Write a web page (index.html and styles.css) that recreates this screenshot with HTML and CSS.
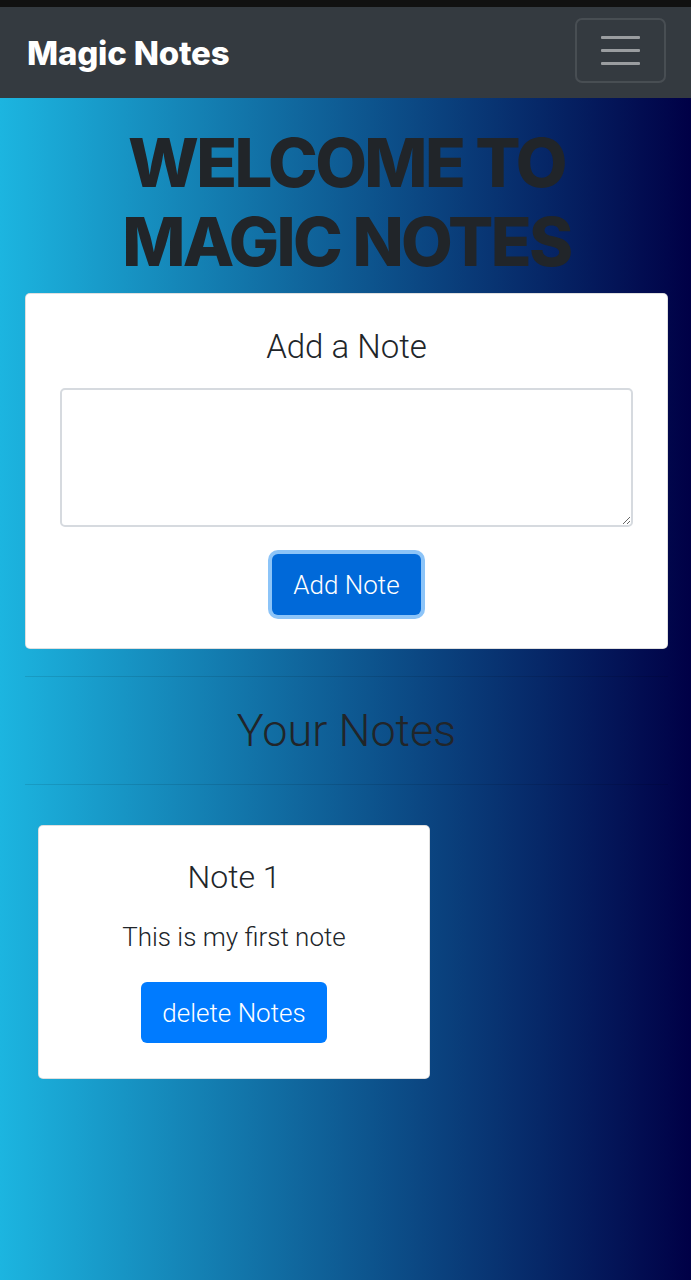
FILE: index.html
```html
<!DOCTYPE html>
<html>
<head>
<meta charset="utf-8">
<link rel="stylesheet" href="styles.css">
</head>
<body>
<div class="statusbar"></div>
<nav class="navbar">
  <a class="brand">Magic Notes</a>
  <button class="toggler"><span class="bar"></span><span class="bar"></span><span class="bar"></span></button>
</nav>
<main class="page">
  <h1 class="welcome">WELCOME TO<br>MAGIC NOTES</h1>
  <section class="card add-card">
    <h5 class="card-title">Add a Note</h5>
    <textarea class="note-input"></textarea>
    <div class="center"><button class="btn btn-add">Add Note</button></div>
  </section>
  <hr class="rule">
  <h1 class="your-notes">Your Notes</h1>
  <hr class="rule">
  <div class="notes">
    <div class="card note-card">
      <h5 class="note-title">Note 1</h5>
      <p class="note-text">This is my first note</p>
      <button class="btn btn-delete">delete Notes</button>
    </div>
  </div>
</main>
</body>
</html>
```

FILE: styles.css
```css
html, body {
  margin: 0;
  padding: 0;
}
body {
  min-height: 1280px;
  background: linear-gradient(to right, #1cb5e0, #000046);
  font-family: Roboto, "Liberation Sans", sans-serif;
  color: #212529;
}
.statusbar {
  height: 7px;
  background: #111111;
}
.navbar {
  height: 91px;
  background: #343a40;
  display: flex;
  align-items: center;
  justify-content: space-between;
  padding: 0 25px 0 27px;
  box-sizing: border-box;
}
.brand {
  color: #fff;
  font-family: Inter, "Open Sans", sans-serif;
  font-weight: 800;
  font-size: 33px;
  letter-spacing: -0.2px;
}
.toggler {
  width: 91px;
  height: 65px;
  border: 2px solid rgba(255,255,255,0.1);
  border-radius: 7px;
  background: transparent;
  display: flex;
  flex-direction: column;
  align-items: center;
  justify-content: center;
  gap: 10px;
  padding: 0;
  margin-top: -5px;
}
.bar {
  display: block;
  width: 39px;
  height: 3px;
  background: rgba(255,255,255,0.5);
  border-radius: 1px;
}
.page {
  padding: 25px 23px 0 25px;
}
.welcome {
  margin: 0 0 12px;
  text-align: center;
  font-family: Inter, "Open Sans", sans-serif;
  font-weight: 800;
  font-size: 67px;
  line-height: 79px;
  letter-spacing: -2.6px;
  color: #212529;
}
.card {
  background: #fff;
  border: 1px solid rgba(0,0,0,0.125);
  border-radius: 5px;
  box-sizing: border-box;
}
.add-card {
  padding: 34px 34px 33px;
  text-align: center;
}
.card-title {
  margin: 0 0 22px;
  font-weight: 300;
  font-size: 33px;
  line-height: 38px;
}
.note-input {
  display: block;
  width: 100%;
  height: 139px;
  box-sizing: border-box;
  border: 2px solid #d6dadf;
  border-radius: 5px;
  margin: 0 0 27px;
  resize: vertical;
}
.center {
  display: flex;
  justify-content: center;
}
.btn {
  font-family: Roboto, "Liberation Sans", sans-serif;
  font-weight: 300;
  font-size: 26px;
  color: #fff;
  border: none;
  border-radius: 6px;
  height: 61px;
  padding: 0 21px;
}
.btn-add {
  background: #0069d9;
  box-shadow: 0 0 0 4px #8cc4f8;
  width: 149px;
}
.rule {
  margin: 27px 0 0;
  border: 0;
  border-top: 1px solid rgba(0,0,0,0.1);
}
.your-notes {
  margin: 0;
  height: 107px;
  display: flex;
  align-items: center;
  justify-content: center;
  font-weight: 300;
  font-size: 45px;
  color: #212529;
}
.your-notes + .rule {
  margin-top: 0;
}
.notes {
  padding: 40px 0 0 13px;
}
.note-card {
  width: 392px;
  height: 254px;
  padding: 32px 20px 33px;
  text-align: center;
  display: flex;
  flex-direction: column;
  align-items: center;
}
.note-title {
  margin: 0 0 26px;
  font-weight: 300;
  font-size: 32px;
  line-height: 38px;
}
.note-text {
  margin: 0 0 30px;
  font-weight: 300;
  font-size: 26px;
  line-height: 30px;
}
.btn-delete {
  background: #007bff;
  width: 186px;
  padding: 0;
}
```
